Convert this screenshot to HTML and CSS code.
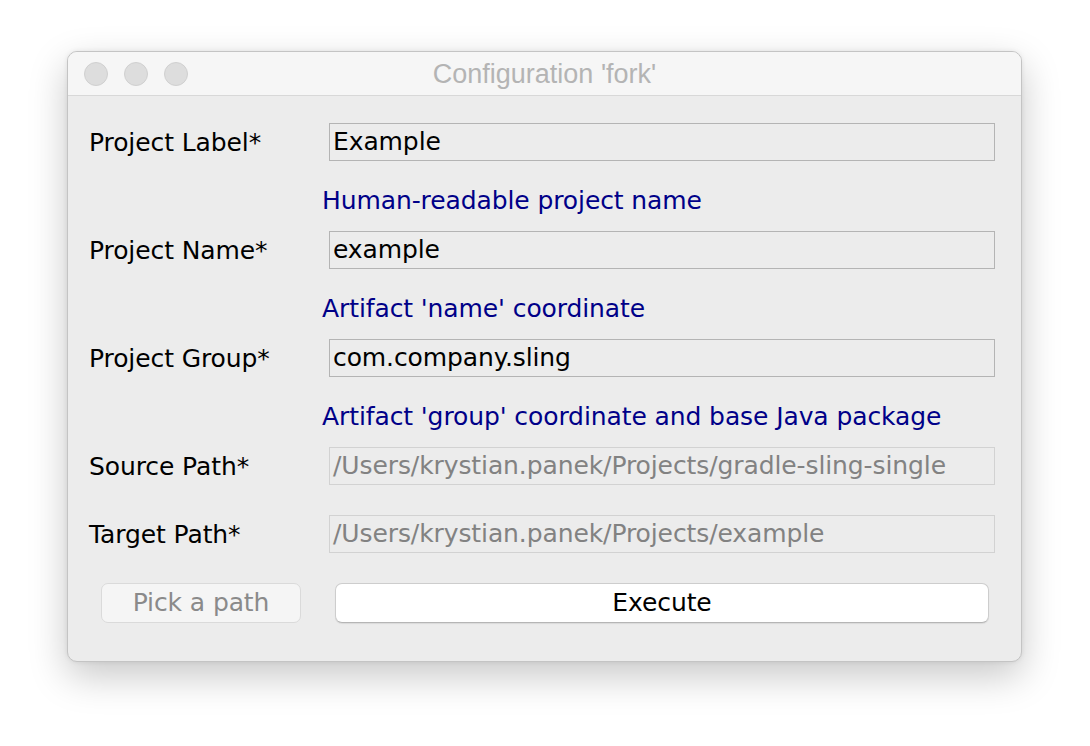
FILE: index.html
```html
<!DOCTYPE html>
<html>
<head>
<meta charset="utf-8">
<link rel="stylesheet" href="styles.css">
</head>
<body>
<div class="window">
  <div class="titlebar">
    <div class="lights">
      <span class="light"></span>
      <span class="light"></span>
      <span class="light"></span>
    </div>
    <div class="title">Configuration 'fork'</div>
  </div>
  <div class="content">
    <div class="row">
      <label class="label">Project Label*</label>
      <div class="field">Example</div>
    </div>
    <div class="help">Human-readable project name</div>
    <div class="row">
      <label class="label">Project Name*</label>
      <div class="field">example</div>
    </div>
    <div class="help">Artifact 'name' coordinate</div>
    <div class="row">
      <label class="label">Project Group*</label>
      <div class="field">com.company.sling</div>
    </div>
    <div class="help">Artifact 'group' coordinate and base Java package</div>
    <div class="row">
      <label class="label">Source Path*</label>
      <div class="field disabled">/Users/krystian.panek/Projects/gradle-sling-single</div>
    </div>
    <div class="row spaced">
      <label class="label">Target Path*</label>
      <div class="field disabled">/Users/krystian.panek/Projects/example</div>
    </div>
    <div class="buttons">
      <div class="btn btn-disabled">Pick a path</div>
      <div class="btn btn-primary">Execute</div>
    </div>
  </div>
</div>
</body>
</html>
```

FILE: styles.css
```css
html {
  height: 100%;
  background: #ffffff;
}
html, body {
  margin: 0;
  padding: 0;
}
body {
  min-height: 100%;
  box-sizing: border-box;
  padding: 51px 0 0 67px;
  font-family: "DejaVu Sans", "Noto Sans", sans-serif;
}
.window {
  width: 955px;
  height: 611px;
  box-sizing: border-box;
  border: 1px solid #c4c4c4;
  border-radius: 10px;
  background: #ececec;
  overflow: hidden;
  box-shadow: 0 14px 38px rgba(0, 0, 0, 0.22), 0 0 5px rgba(0,0,0,0.08);
  display: flex;
  flex-direction: column;
}
.titlebar {
  height: 43px;
  flex: none;
  background: #f6f6f6;
  border-bottom: 1px solid #d8d8d8;
  display: flex;
  align-items: center;
  position: relative;
}
.lights {
  display: flex;
  gap: 16px;
  padding-left: 16px;
}
.light {
  width: 22px;
  height: 22px;
  border-radius: 50%;
  background: #dddddd;
  border: 1px solid #d0d0d0;
}
.title {
  position: absolute;
  left: 0;
  right: 0;
  top: 0;
  bottom: 0;
  display: flex;
  align-items: center;
  justify-content: center;
  font-family: "Liberation Sans", Arial, sans-serif;
  font-size: 27px;
  color: #b4b4b4;
  padding-top: 1px;
}
.content {
  padding: 27px 26px 0 21px;
  font-size: 25px;
  letter-spacing: -0.1px;
  color: #000;
}
.row {
  display: grid;
  grid-template-columns: 240px 1fr;
  align-items: center;
  height: 38px;
}
.row.spaced {
  margin-top: 30px;
}
.label {
  white-space: nowrap;
}
.field {
  height: 38px;
  box-sizing: border-box;
  border: 1px solid #b4b4b4;
  padding: 0 3px;
  line-height: 36px;
  white-space: nowrap;
  overflow: hidden;
  background: #ececec;
}
.field.disabled {
  border-color: #d2d2d2;
  color: #828282;
}
.help {
  height: 70px;
  box-sizing: border-box;
  padding: 25px 0 0 233px;
  line-height: 30px;
  color: #000088;
}
.buttons {
  display: flex;
  gap: 34px;
  margin-top: 30px;
  padding: 0 6px 0 12px;
  height: 40px;
}
.btn {
  box-sizing: border-box;
  height: 40px;
  line-height: 38px;
  text-align: center;
  border-radius: 7px;
}
.btn-disabled {
  width: 200px;
  background: #f5f5f5;
  border: 1px solid #dadada;
  color: #8a8a8a;
}
.btn-primary {
  flex: 1;
  background: #ffffff;
  border: 1px solid #cdcdcd;
  border-bottom-color: #b5b5b5;
  box-shadow: 0 1px 1px rgba(0,0,0,0.08);
}
```
